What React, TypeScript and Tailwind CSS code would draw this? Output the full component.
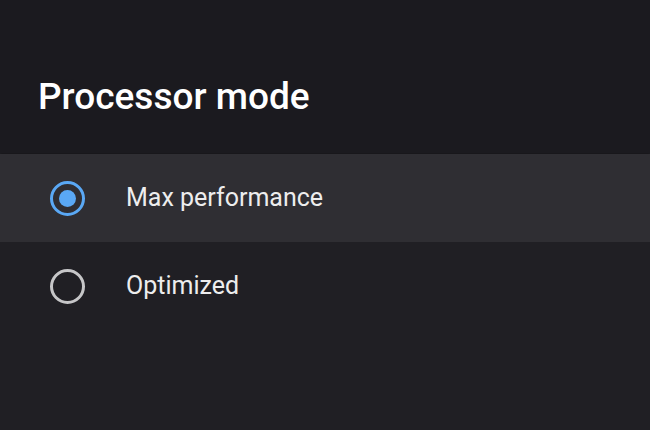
import React, { useState } from 'react';

const options = ['Max performance', 'Optimized'];

const Radio: React.FC<{ checked: boolean }> = ({ checked }) => (
    <span
        className={`flex h-[35px] w-[35px] items-center justify-center rounded-full border-[3px] ${
            checked ? 'border-[#5aa8f5]' : 'border-[#c6c6c8]'
        }`}
    >
        {checked && <span className="h-[17px] w-[17px] rounded-full bg-[#5aa8f5]" />}
    </span>
);

const App: React.FC = () => {
    const [selected, setSelected] = useState(0);

    return (
        <div className="h-[430px] w-[650px] overflow-hidden bg-[#201f24] font-['Roboto',sans-serif]">
            <div className="flex h-[153px] items-start bg-[#1b1a1f] pl-[38px] pt-[75px] shadow-[0_1px_2px_rgba(0,0,0,0.35)]">
                <h1 className="text-[37px] font-medium leading-[44px] text-white">Processor mode</h1>
            </div>
            <div className="pt-[1px]">
                {options.map((label, i) => (
                    <div
                        key={label}
                        onClick={() => setSelected(i)}
                        className={`flex h-[88px] cursor-pointer items-center ${selected === i ? 'bg-[#2f2e33]' : ''}`}
                    >
                        <div className="flex w-[126px] pl-[50px]">
                            <Radio checked={selected === i} />
                        </div>
                        <span className="text-[25px] text-[#ededee]">{label}</span>
                    </div>
                ))}
            </div>
        </div>
    );
};

export default App;
